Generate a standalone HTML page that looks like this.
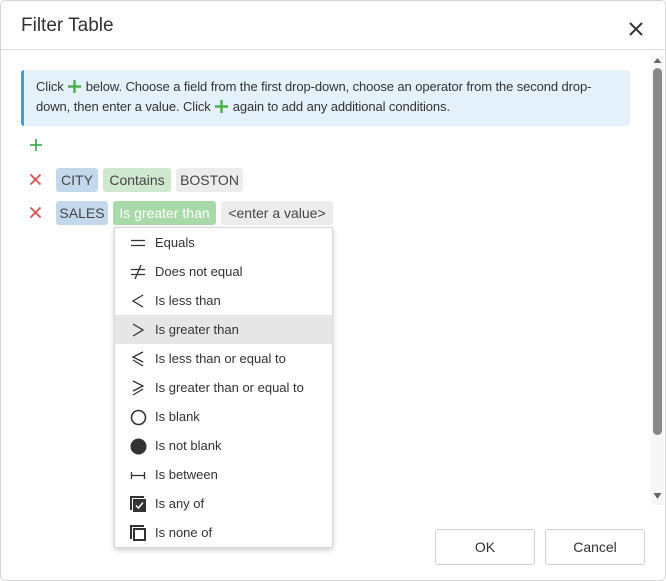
<!DOCTYPE html>
<html><head><style>
body{margin:0;width:666px;height:581px;background:#fff;font-family:"Liberation Sans",sans-serif;color:#333;position:relative;overflow:hidden}
.dlg{position:absolute;left:0;top:0;width:664px;height:579px;border:1px solid #d5d5d5;border-radius:5px}
.title{position:absolute;left:21px;top:15px;font-size:19px;color:#333}
.close{position:absolute;left:628px;top:21px}
.hl{position:absolute;left:1px;top:49px;width:664px;height:1px;background:#dedede}
.info{position:absolute;left:21px;top:70px;height:56px;background:#e4f1fb;border-left:3px solid #3d9be0;border-radius:3px;box-sizing:border-box;width:609px;font-size:13px;line-height:20px;padding:7px 0 0 12px;color:#333;white-space:nowrap;letter-spacing:-0.1px}
.pl{display:inline-block;vertical-align:-3px}
.chip{position:absolute;height:24px;line-height:24px;font-size:14px;text-align:center;border-radius:3px}
.f{background:#c3d8ea;color:#444}.o{background:#cfe8d0;color:#444}.v{background:#ececec;color:#444}
.menu{position:absolute;left:114px;top:227px;width:217px;height:319px;background:#fff;border:1px solid #d8d8d8;box-shadow:0 2px 5px rgba(0,0,0,.2)}
.it{position:absolute;left:0;width:217px;height:29px;line-height:29px;font-size:13px;color:#333}
.it span{position:absolute;left:40px}
.it svg{position:absolute;left:15px;top:7px}
.sb{position:absolute;left:651px;top:55px;width:13px;height:450px;background:#f7f7f7}
.btn{position:absolute;top:529px;width:98px;height:34px;border:1px solid #d0d0d0;border-radius:3px;font-size:14px;text-align:center;line-height:34px;color:#333}
</style></head><body>
<div class="dlg"></div>
<div class="title">Filter Table</div>
<svg class="close" width="16" height="16" viewBox="0 0 16 16"><path d="M2 2L14 14M14 2L2 14" stroke="#333" stroke-width="2"/></svg>
<div class="hl"></div>
<div class="sb"><svg width="13" height="450"><path d="M2.5 8L6.5 3L10.5 8Z" fill="#666"/><rect x="2" y="13" width="9" height="367" rx="4.5" fill="#888"/><path d="M2.5 438L6.5 444L10.5 438Z" fill="#666"/></svg></div>
<div class="info">Click <svg class="pl" width="15" height="15" viewBox="0 0 15 15"><path d="M7.5 1V14M1 7.5H14" stroke="#4cae4f" stroke-width="2.4"/></svg> below. Choose a field from the first drop-down, choose an operator from the second drop-<br>down, then enter a value. Click <svg class="pl" width="15" height="15" viewBox="0 0 15 15"><path d="M7.5 1V14M1 7.5H14" stroke="#4cae4f" stroke-width="2.4"/></svg> again to add any additional conditions.</div>
<svg style="position:absolute;left:30px;top:139px" width="12" height="12"><path d="M6 0V12M0 6H12" stroke="#4cae4f" stroke-width="1.8"/></svg>
<svg style="position:absolute;left:30px;top:174px" width="11" height="11"><path d="M0.5 0.5L10.5 10.5M10.5 0.5L0.5 10.5" stroke="#d9534f" stroke-width="1.8"/></svg>
<svg style="position:absolute;left:30px;top:207px" width="11" height="11"><path d="M0.5 0.5L10.5 10.5M10.5 0.5L0.5 10.5" stroke="#d9534f" stroke-width="1.8"/></svg>
<div class="chip f" style="left:56px;top:168px;width:42px">CITY</div>
<div class="chip o" style="left:103px;top:168px;width:68px">Contains</div>
<div class="chip v" style="left:176px;top:168px;width:67px">BOSTON</div>
<div class="chip f" style="left:56px;top:201px;width:52px">SALES</div>
<div class="chip o" style="left:113px;top:201px;width:103px;background:#a8d9a9;color:#fff">Is greater than</div>
<div class="chip v" style="left:221px;top:201px;width:112px">&lt;enter a value&gt;</div>
<div class="menu">
<div class="it" style="top:0"><svg width="16" height="16"><path d="M1 5.5H15M1 10.5H15" stroke="#333" stroke-width="1.3"/></svg><span>Equals</span></div>
<div class="it" style="top:29px"><svg width="16" height="16"><path d="M1 5.5H15M1 10.5H15M11 1L5 15" stroke="#333" stroke-width="1.3"/></svg><span>Does not equal</span></div>
<div class="it" style="top:58px"><svg width="16" height="16"><path d="M13 2L3 8L13 14" fill="none" stroke="#333" stroke-width="1.3"/></svg><span>Is less than</span></div>
<div class="it" style="top:87px;background:#e6e6e6"><svg width="16" height="16"><path d="M3 2L13 8L3 14" fill="none" stroke="#333" stroke-width="1.3"/></svg><span>Is greater than</span></div>
<div class="it" style="top:116px"><svg width="16" height="16"><path d="M13 1L3 6L13 11M3 9L13 15" fill="none" stroke="#333" stroke-width="1.3"/></svg><span>Is less than or equal to</span></div>
<div class="it" style="top:145px"><svg width="16" height="16"><path d="M3 1L13 6L3 11M13 9L3 15" fill="none" stroke="#333" stroke-width="1.3"/></svg><span>Is greater than or equal to</span></div>
<div class="it" style="top:174px"><svg width="17" height="17"><circle cx="8.5" cy="8.5" r="7" fill="none" stroke="#333" stroke-width="1.6"/></svg><span>Is blank</span></div>
<div class="it" style="top:203px"><svg width="17" height="17"><circle cx="8.5" cy="8.5" r="8" fill="#333"/></svg><span>Is not blank</span></div>
<div class="it" style="top:232px"><svg width="16" height="16"><path d="M1.5 5V12M14.5 5V12M1.5 8.5H14.5" stroke="#333" stroke-width="1.3"/></svg><span>Is between</span></div>
<div class="it" style="top:261px"><svg width="16" height="16"><path d="M0 0H14V2H2V14H0Z" fill="#333"/><rect x="3" y="3" width="13" height="13" fill="#333"/><path d="M6 9.5L8.5 12L13 6.5" fill="none" stroke="#fff" stroke-width="1.5"/></svg><span>Is any of</span></div>
<div class="it" style="top:290px"><svg width="16" height="16"><path d="M0 0H14V2H2V14H0Z" fill="#333"/><rect x="4" y="4" width="11" height="11" fill="none" stroke="#333" stroke-width="2"/></svg><span>Is none of</span></div>
</div>
<div class="btn" style="left:435px">OK</div>
<div class="btn" style="left:545px">Cancel</div>
</body></html>
